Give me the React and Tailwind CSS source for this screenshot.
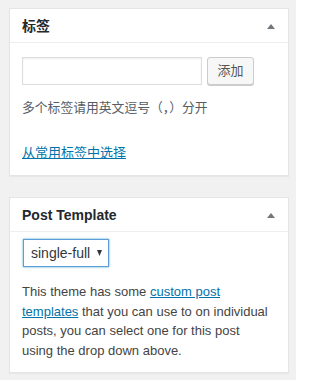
const SANS = "font-['Liberation_Sans','Noto_Sans_CJK_SC',sans-serif]";

// Small collapse arrow shown at the right of each box header
const ToggleArrow = () => (
  <svg width="8" height="5" viewBox="0 0 8 5" className="shrink-0">
    <path d="M4 0 L8 5 L0 5 Z" fill="#72777c" />
  </svg>
);

const BoxHeader = ({ title }) => (
  <div className="flex h-[34px] items-center justify-between border-b border-[#eeeeee] pl-3 pr-[13px] pt-px">
    <h2 className="text-[14px] font-bold text-[#23282d]">{title}</h2>
    <ToggleArrow />
  </div>
);

const TagsBox = () => (
  <div className="border border-[#e5e5e5] bg-white shadow-[0_1px_1px_rgba(0,0,0,0.04)]">
    <BoxHeader title="标签" />
    <div className="px-3 pb-3 pt-[14px]">
      <div className="flex items-center gap-[5px]">
        <div className="h-[28px] w-[180px] border border-[#dddddd] shadow-[inset_0_1px_2px_rgba(0,0,0,0.07)]" />
        <button className="h-[28px] w-[47px] rounded-[3px] border border-[#cccccc] bg-[#f7f7f7] text-[13px] text-[#555555] shadow-[0_1px_0_#cccccc]">
          添加
        </button>
      </div>
      <p className="mt-[13px] text-[12.8px] leading-[20px] text-[#555d66]">
        多个标签请用英文逗号（，）分开
      </p>
      <p className="mt-[24px] leading-[20px]">
        <a href="#" className="text-[13px] text-[#0073aa] underline">
          从常用标签中选择
        </a>
      </p>
    </div>
  </div>
);

const TemplateBox = () => (
  <div className="border border-[#e5e5e5] bg-white shadow-[0_1px_1px_rgba(0,0,0,0.04)]">
    <BoxHeader title="Post Template" />
    <div className="pb-3 pl-3 pr-[14px] pt-[7px]">
      <div className="ml-px flex h-[28px] w-[86px] items-center justify-between border border-[#5b9dd9] pl-[7px] pr-[6px] shadow-[0_0_2px_rgba(30,140,190,0.8)]">
        <span className="text-[14px] text-[#32373c]">single-full</span>
        <svg width="5" height="6" viewBox="0 0 5 6">
          <path d="M0 0 L5 0 L2.5 6 Z" fill="#32373c" />
        </svg>
      </div>
      <p className="mt-[15px] text-[13px] leading-[19.5px] text-[#444444]">
        This theme has some{" "}
        <a href="#" className="text-[#0073aa] underline">
          custom post templates
        </a>{" "}
        that you can use to on individual posts, you can select one for this post using the drop down above.
      </p>
    </div>
  </div>
);

export default function App() {
  return (
    <div className={`${SANS} min-h-[380px] w-[296px] bg-[#f1f1f1] pl-[9px] pr-[7px] pt-[8px]`}>
      <div className="flex flex-col gap-[21px]">
        <TagsBox />
        <TemplateBox />
      </div>
    </div>
  );
}
